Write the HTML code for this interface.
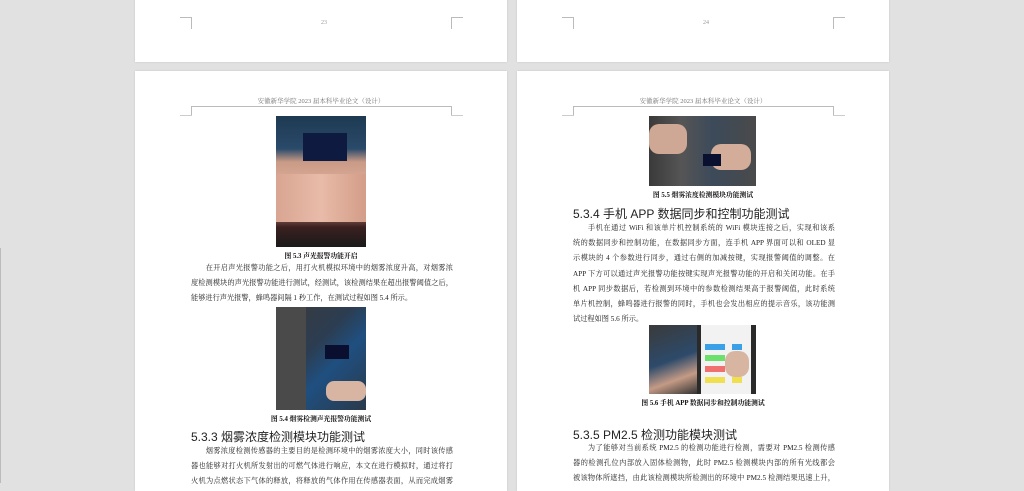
<!DOCTYPE html>
<html><head><meta charset="utf-8"><style>
*{margin:0;padding:0;box-sizing:border-box}
body{width:1024px;height:483px;background:#e1e1e1;position:relative;overflow:hidden;font-family:"Liberation Serif","Noto Serif CJK SC",serif;color:#222}
.pg{position:absolute;background:#fff;box-shadow:0 0 2px rgba(0,0,0,.12)}
.abs{position:absolute}
.cm{position:absolute;width:12px;height:12px;border-color:#bbb;border-style:solid;border-width:0}
.hdr{position:absolute;font-size:6.5px;color:#777;text-align:center;width:260px}
.hl{position:absolute;height:10px;border:1px solid #bbb;border-bottom:none}
.cap{position:absolute;font-size:6.8px;font-weight:bold;text-align:center;width:260px;color:#111}
.h3{position:absolute;font-size:12px;font-family:"Liberation Sans","Noto Sans CJK SC",sans-serif;color:#222;white-space:nowrap}
.p{position:absolute;width:262px;font-size:7.2px;line-height:15.2px;color:#222}
.p span{display:block;white-space:nowrap;text-align:justify;text-align-last:justify}
.p span.l{text-align-last:left}
</style></head><body>
<div style="position:absolute;left:0;top:248px;width:1px;height:235px;background:#bbb"></div>
<div class="pg" style="left:135px;top:-5px;width:372px;height:67px"></div>
<div class="pg" style="left:517px;top:-5px;width:372px;height:67px"></div>
<div class="cm" style="left:180px;top:17px;border-top-width:1px;border-right-width:1px"></div>
<div class="cm" style="left:451px;top:17px;border-top-width:1px;border-left-width:1px"></div>
<div class="cm" style="left:562px;top:17px;border-top-width:1px;border-right-width:1px"></div>
<div class="cm" style="left:833px;top:17px;border-top-width:1px;border-left-width:1px"></div>
<div class="abs" style="left:321px;top:20px;font-size:6px;color:#999">23</div>
<div class="abs" style="left:703px;top:20px;font-size:6px;color:#999">24</div>
<div class="pg" style="left:135px;top:71px;width:372px;height:420px"></div>
<div class="pg" style="left:517px;top:71px;width:372px;height:420px"></div>

<div class="hdr" style="left:191px;top:96px">安徽新华学院 2023 届本科毕业论文（设计）</div>
<div class="hl" style="left:191px;top:106px;width:261px"></div>
<div class="abs" style="left:180px;top:115px;width:12px;border-top:1px solid #ccc"></div>
<div class="abs" style="left:451px;top:115px;width:12px;border-top:1px solid #ccc"></div>
<div class="abs" style="left:276px;top:116px;width:90px;height:131px;background:linear-gradient(180deg,#1e3a52 0%,#2a4a6a 25%,#c99a86 35%,#e0b09c 55%,#c48a78 70%,#3a2020 85%,#1a1a1a 100%)">
 <div class="abs" style="left:27px;top:17px;width:44px;height:28px;background:#0e1a40"></div>
 <div class="abs" style="left:0;top:58px;width:90px;height:48px;background:linear-gradient(90deg,#d8a592,#e8bba8,#d39d88)"></div>
</div>
<div class="cap" style="left:191px;top:250px">图 5.3  声光报警功能开启</div>
<div class="p" style="left:191px;top:261px">
<span>&emsp;&emsp;在开启声光报警功能之后，用打火机模拟环境中的烟雾浓度升高，对烟雾浓</span>
<span>度检测模块的声光报警功能进行测试，经测试，该检测结果在超出报警阈值之后，</span>
<span class="l">能够进行声光报警，蜂鸣器间隔 1 秒工作，在测试过程如图 5.4 所示。</span>
</div>
<div class="abs" style="left:276px;top:307px;width:90px;height:103px;background:linear-gradient(135deg,#3a3a3a 0%,#2c3d52 40%,#1f4f80 60%,#2a3a4a 100%)">
 <div class="abs" style="left:49px;top:38px;width:24px;height:14px;background:#0a0f30"></div>
 <div class="abs" style="left:50px;top:74px;width:40px;height:20px;background:#d8b5a3;border-radius:8px"></div>
 <div class="abs" style="left:0;top:0;width:30px;height:103px;background:#4a4a4a"></div>
</div>
<div class="cap" style="left:191px;top:413px">图 5.4  烟雾检测声光报警功能测试</div>
<div class="h3" style="left:191px;top:428px">5.3.3 烟雾浓度检测模块功能测试</div>
<div class="p" style="left:191px;top:444px">
<span>&emsp;&emsp;烟雾浓度检测传感器的主要目的是检测环境中的烟雾浓度大小，同时该传感</span>
<span>器也能够对打火机所发射出的可燃气体进行响应，本文在进行模拟时，通过将打</span>
<span>火机为点燃状态下气体的释放，将释放的气体作用在传感器表面，从而完成烟雾</span>
</div>

<div class="hdr" style="left:573px;top:96px">安徽新华学院 2023 届本科毕业论文（设计）</div>
<div class="hl" style="left:573px;top:106px;width:261px"></div>
<div class="abs" style="left:562px;top:115px;width:12px;border-top:1px solid #ccc"></div>
<div class="abs" style="left:833px;top:115px;width:12px;border-top:1px solid #ccc"></div>
<div class="abs" style="left:649px;top:116px;width:107px;height:70px;background:linear-gradient(90deg,#3a3a3a,#555 30%,#3c4a5a 60%,#4a4a4a)">
 <div class="abs" style="left:0;top:8px;width:38px;height:30px;background:#cfa795;border-radius:10px"></div>
 <div class="abs" style="left:62px;top:28px;width:40px;height:26px;background:#d4ad9a;border-radius:10px"></div>
 <div class="abs" style="left:54px;top:38px;width:18px;height:12px;background:#0a1030"></div>
</div>
<div class="cap" style="left:573px;top:189px">图 5.5  烟雾浓度检测模块功能测试</div>
<div class="h3" style="left:573px;top:205px">5.3.4 手机 APP 数据同步和控制功能测试</div>
<div class="p" style="left:573px;top:221px">
<span>&emsp;&emsp;手机在通过 WiFi 和该单片机控制系统的 WiFi 模块连接之后，实现和该系</span>
<span>统的数据同步和控制功能，在数据同步方面，连手机 APP 界面可以和 OLED 显</span>
<span>示模块的 4 个参数进行同步，通过右侧的加减按键，实现报警阈值的调整。在</span>
<span>APP 下方可以通过声光报警功能按键实现声光报警功能的开启和关闭功能。在手</span>
<span>机 APP 同步数据后，若检测到环境中的参数检测结果高于报警阈值，此时系统</span>
<span>单片机控制，蜂鸣器进行报警的同时，手机也会发出相应的提示音乐，该功能测</span>
<span class="l">试过程如图 5.6 所示。</span>
</div>
<div class="abs" style="left:649px;top:325px;width:48px;height:69px;background:linear-gradient(160deg,#3a3a3a,#2d4a6a 50%,#c49a85 75%,#333)"></div>
<div class="abs" style="left:697px;top:325px;width:59px;height:69px;background:#2a2a2a">
 <div class="abs" style="left:4px;top:0;width:50px;height:69px;background:#f2f2f2">
  <div class="abs" style="left:4px;top:19px;width:20px;height:6px;background:#3aa0e8"></div>
  <div class="abs" style="left:31px;top:19px;width:10px;height:6px;background:#3aa0e8"></div>
  <div class="abs" style="left:4px;top:30px;width:20px;height:6px;background:#6be06b"></div>
  <div class="abs" style="left:4px;top:41px;width:20px;height:6px;background:#f07070"></div>
  <div class="abs" style="left:31px;top:41px;width:10px;height:6px;background:#f07070"></div>
  <div class="abs" style="left:4px;top:52px;width:20px;height:6px;background:#f0e050"></div>
  <div class="abs" style="left:31px;top:52px;width:10px;height:6px;background:#f0e050"></div>
  <div class="abs" style="left:24px;top:26px;width:24px;height:26px;background:#d8b5a0;border-radius:10px"></div>
 </div>
</div>
<div class="cap" style="left:573px;top:397px">图 5.6  手机 APP 数据同步和控制功能测试</div>
<div class="h3" style="left:573px;top:426px">5.3.5 PM2.5 检测功能模块测试</div>
<div class="p" style="left:573px;top:441px">
<span>&emsp;&emsp;为了能够对当前系统 PM2.5 的检测功能进行检测，需要对 PM2.5 检测传感</span>
<span>器的检测孔位内部放入固体检测物，此时 PM2.5 检测模块内部的所有光线都会</span>
<span>被该物体所遮挡，由此该检测模块所检测出的环境中 PM2.5 检测结果迅速上升，</span>
</div>
</body></html>
